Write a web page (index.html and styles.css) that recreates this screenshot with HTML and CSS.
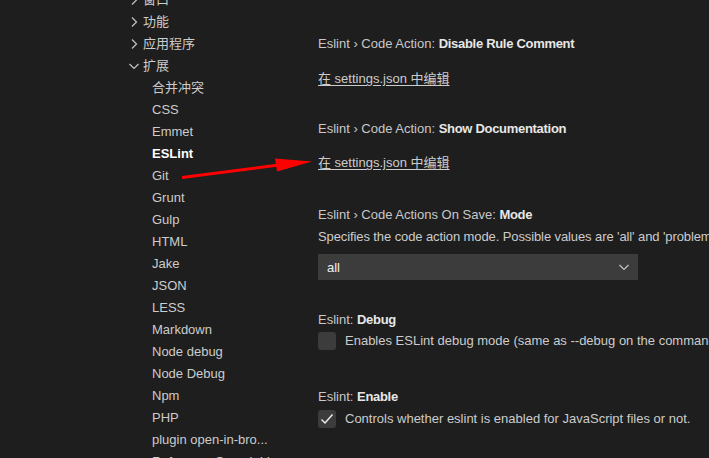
FILE: index.html
```html
<!DOCTYPE html>
<html lang="zh">
<head>
<meta charset="utf-8">
<link rel="stylesheet" href="styles.css">
</head>
<body>
<div class="layout">
  <nav class="toc">
    <div class="row top"><svg class="chev" viewBox="0 0 16 16"><path d="M6 3.5l4.5 4.5L6 12.5"/></svg><span>窗口</span></div>
    <div class="row top"><svg class="chev" viewBox="0 0 16 16"><path d="M6 3.5l4.5 4.5L6 12.5"/></svg><span>功能</span></div>
    <div class="row top"><svg class="chev" viewBox="0 0 16 16"><path d="M6 3.5l4.5 4.5L6 12.5"/></svg><span>应用程序</span></div>
    <div class="row top"><svg class="chev" viewBox="0 0 16 16"><path d="M3.5 6l4.5 4.5L12.5 6"/></svg><span>扩展</span></div>
    <div class="row child">合并冲突</div>
    <div class="row child">CSS</div>
    <div class="row child">Emmet</div>
    <div class="row child active">ESLint</div>
    <div class="row child">Git</div>
    <div class="row child">Grunt</div>
    <div class="row child">Gulp</div>
    <div class="row child">HTML</div>
    <div class="row child">Jake</div>
    <div class="row child">JSON</div>
    <div class="row child">LESS</div>
    <div class="row child">Markdown</div>
    <div class="row child">Node debug</div>
    <div class="row child">Node Debug</div>
    <div class="row child">Npm</div>
    <div class="row child">PHP</div>
    <div class="row child">plugin open-in-bro...</div>
    <div class="row child">Reference Search V...</div>
  </nav>
  <main class="settings">
    <section class="item item-1">
      <div class="title"><span class="cat">Eslint › Code Action: </span><span class="key">Disable Rule Comment</span></div>
      <a class="link">在 settings.json 中编辑</a>
    </section>
    <section class="item item-2">
      <div class="title"><span class="cat">Eslint › Code Action: </span><span class="key">Show Documentation</span></div>
      <a class="link">在 settings.json 中编辑</a>
    </section>
    <section class="item item-3">
      <div class="title"><span class="cat">Eslint › Code Actions On Save: </span><span class="key">Mode</span></div>
      <div class="desc">Specifies the code action mode. Possible values are 'all' and 'problems'.</div>
      <div class="select"><span>all</span><svg class="select-chev" viewBox="0 0 16 16"><path d="M3.5 6l4.5 4.5L12.5 6"/></svg></div>
    </section>
    <section class="item item-4">
      <div class="title"><span class="cat">Eslint: </span><span class="key">Debug</span></div>
      <div class="check-row"><span class="box"></span><span class="desc">Enables ESLint debug mode (same as --debug on the command line)</span></div>
    </section>
    <section class="item item-5">
      <div class="title"><span class="cat">Eslint: </span><span class="key">Enable</span></div>
      <div class="check-row"><span class="box"><svg class="tick" viewBox="0 0 18 18"><path d="M3.5 9.5l3.5 3.5 7.5-8.5"/></svg></span><span class="desc">Controls whether eslint is enabled for JavaScript files or not.</span></div>
    </section>
  </main>
</div>
<svg class="arrow" viewBox="0 0 709 458" width="709" height="458">
  <path d="M182 177.5 L290 163.5" stroke="#ff0000" stroke-width="3" fill="none"/>
  <polygon points="275,158.5 312,161.5 277,171.5" fill="#ff0000"/>
</svg>
</body>
</html>
```
FILE: styles.css
```css
html, body {
  margin: 0;
  padding: 0;
  background: #1e1e1e;
  width: 709px;
  height: 458px;
  overflow: hidden;
}
body {
  position: relative;
  font-family: "Liberation Sans", "Noto Sans CJK SC", sans-serif;
  font-size: 13px;
  color: #cccccc;
}
.layout {
  display: flex;
  white-space: nowrap;
}
.toc {
  flex: 0 0 318px;
  margin-top: -11px;
  padding-left: 126px;
  box-sizing: border-box;
}
.row {
  height: 22px;
  line-height: 22px;
  display: flex;
  align-items: center;
}
.row.top span { margin-left: 1px; }
.chev {
  width: 16px;
  height: 16px;
  fill: none;
  stroke: #c5c5c5;
  stroke-width: 1.2;
}
.row.child { padding-left: 26px; }
.row.active { font-weight: bold; color: #ffffff; }
.settings {
  flex: 1;
  min-width: 0;
  padding-top: 35px;
}
.title {
  line-height: 18px;
  height: 18px;
  color: #c8c8c8;
}
.cat { font-weight: normal; }
.key { font-weight: bold; color: #e7e7e7; letter-spacing: -0.3px; }
.link {
  display: block;
  line-height: 18px;
  color: #cccccc;
  text-decoration: underline;
  text-underline-offset: 2px;
}
.item-1 .link { margin-top: 17px; }
.item-2 { margin-top: 32px; }
.item-2 .link { margin-top: 16px; }
.item-3 { margin-top: 34px; }
.desc { line-height: 18px; color: #cccccc; }
.item-3 .desc { margin-top: 4px; letter-spacing: -0.1px; }
.select {
  margin-top: 8px;
  width: 320px;
  height: 26px;
  background: #3c3c3c;
  box-sizing: border-box;
  padding: 0 6px 0 9px;
  display: flex;
  align-items: center;
  justify-content: space-between;
  color: #f0f0f0;
}
.select-chev {
  width: 16px;
  height: 16px;
  fill: none;
  stroke: #c5c5c5;
  stroke-width: 1.2;
}
.item-4 { margin-top: 31px; }
.item-5 { margin-top: 38px; }
.check-row {
  display: flex;
  align-items: center;
  margin-top: 3px;
}
.item-5 .check-row { margin-top: 4px; }
.box {
  width: 18px;
  height: 18px;
  background: #3c3c3c;
  border-radius: 3px;
  margin-right: 9px;
  flex: 0 0 auto;
  display: flex;
}
.tick {
  width: 18px;
  height: 18px;
  fill: none;
  stroke: #f0f0f0;
  stroke-width: 1.4;
}
.arrow {
  position: absolute;
  left: 0;
  top: 0;
  pointer-events: none;
}
```
